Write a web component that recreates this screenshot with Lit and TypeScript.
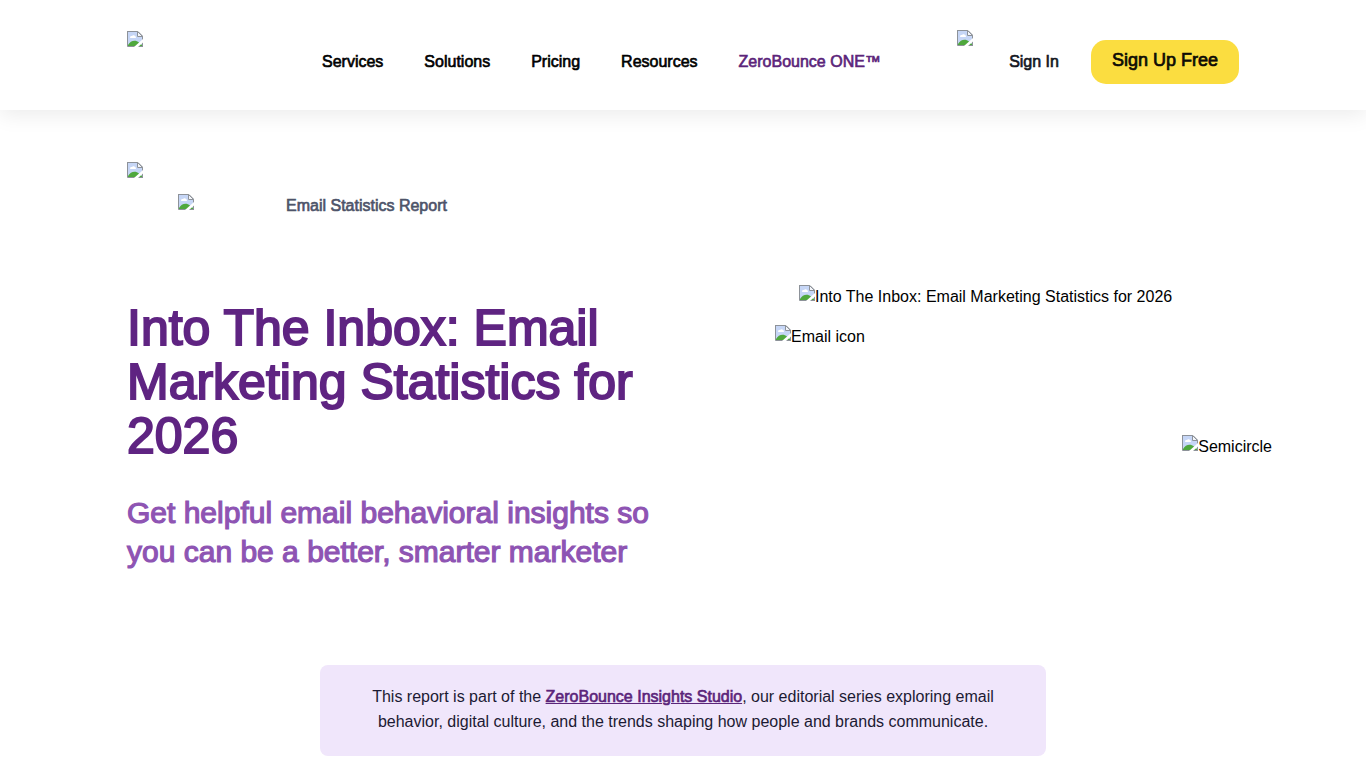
import { LitElement, html, css, svg } from "lit";
import { customElement, property } from "lit/decorators.js";

@customElement("missing-picture")
class MissingPicture extends LitElement {
  @property() alt = "";

  static styles = css`
    :host {
      display: inline-flex;
      align-items: flex-start;
      white-space: nowrap;
      font-size: 16px;
      line-height: 18px;
      color: #000;
    }
    .glyph {
      display: block;
      flex: none;
      width: 16px;
      height: 16px;
    }
    .alt {
      padding-top: 3px;
    }
  `;

  render() {
    return html`
      <svg class="glyph" viewBox="0 0 16 16" aria-hidden="true">
        ${svg`
          <path d="M0.5 0.5H11L15.5 5V15.5H0.5Z" fill="#fff" />
          <path d="M1 1H10.5V5.5H15V15H1Z" fill="#c6d6f6" />
          <path d="M3 6.5C3 5.4 4 4.8 5 5.1C5.5 3.9 7.6 3.9 8 5.2C9.2 5.1 9.5 6.8 8.3 7H3.6C3.2 7 3 6.8 3 6.5Z" fill="#fff" />
          <path d="M1 15V14C3.5 9.4 8.5 8.4 12 11.5L15 14V15Z" fill="#4fa83d" />
          <path d="M0.5 0V15.5H16M15.5 16V5" fill="none" stroke="#8d9299" />
          <path d="M0 0.5H11L15.5 5" fill="none" stroke="#8d9299" />
          <path d="M10.5 0.5V5.5H15.5Z" fill="#f4f6fa" stroke="#8d9299" />
          <path d="M16 8V11.5L11 16H7Z" fill="#fff" />
        `}
      </svg>
      ${this.alt ? html`<span class="alt">${this.alt}</span>` : null}
    `;
  }
}

@customElement("app-root")
class AppRoot extends LitElement {
  static styles = css`
    :host {
      display: block;
      min-height: 100vh;
      background: #fff;
      color: #000;
      font-family: "Liberation Sans", Arial, sans-serif;
      font-size: 16px;
      line-height: 24px;
    }
    a {
      color: inherit;
      text-decoration: none;
    }
    .strong {
      -webkit-text-stroke: 0.04em currentColor;
    }
    .wrap {
      box-sizing: border-box;
      max-width: 1144px;
      margin: 0 auto;
      padding: 0 16px;
    }
    .header {
      box-shadow: 0 5px 20px rgba(0, 0, 0, 0.08);
    }
    .bar {
      display: flex;
      align-items: flex-start;
      padding-top: 30px;
      padding-bottom: 26px;
    }
    .logo {
      display: block;
      width: 195px;
      flex: none;
      padding-top: 1px;
      line-height: 0;
      box-sizing: border-box;
    }
    .nav {
      display: flex;
      gap: 41px;
      padding-top: 20px;
      white-space: nowrap;
    }
    .one {
      color: #5b247a;
    }
    .actions {
      display: flex;
      align-items: flex-start;
      margin-left: auto;
      white-space: nowrap;
    }
    .signin {
      margin: 20px 32px 0 36px;
      color: #14171f;
    }
    .signup {
      margin-top: 10px;
      height: 44px;
      padding: 0 21px 4px;
      border: 0;
      border-radius: 15px;
      background: #fbdd40;
      color: #0e0b05;
      font-family: inherit;
      font-size: 18px;
      line-height: 24px;
    }
    .crumbs {
      padding-top: 52px;
      display: flex;
      flex-direction: column;
      align-items: flex-start;
      gap: 16px;
    }
    .crumb {
      display: flex;
      align-items: flex-start;
      gap: 92px;
      margin-left: 51px;
      color: #4d5369;
    }
    .hero {
      display: grid;
      grid-template-columns: minmax(0, 548px) 497px;
      justify-content: space-between;
      margin-right: -33px;
      padding-top: 67px;
    }
    .copy {
      padding-top: 16px;
    }
    h1 {
      margin: 0;
      font-size: 50px;
      line-height: 54px;
      font-weight: 400;
      color: #5f2482;
      -webkit-text-stroke-width: 0.03em;
    }
    h2 {
      margin: 30px 0 0;
      font-size: 30px;
      line-height: 39px;
      font-weight: 400;
      color: #8e54b3;
      -webkit-text-stroke-width: 0.03em;
    }
    .art {
      display: flex;
      flex-direction: column;
      align-items: flex-start;
    }
    .cover {
      margin-left: 24px;
    }
    .mail {
      margin-top: 19px;
    }
    .semi {
      margin-top: 89px;
      align-self: flex-end;
    }
    .note {
      box-sizing: border-box;
      max-width: 726px;
      margin: 94px auto 12px;
      padding: 19px 40px 22px;
      border-radius: 8px;
      background: #f0e6fb;
      color: #1c1a33;
      text-align: center;
      line-height: 25px;
    }
    .note p {
      margin: 0;
    }
    .note a {
      color: #5b247a;
      text-decoration: underline;
    }
  `;

  render() {
    return html`
      <header class="header">
        <div class="wrap bar">
          <a class="logo" href="#" aria-label="ZeroBounce"><missing-picture></missing-picture></a>
          <nav class="nav strong">
            ${["Services", "Solutions", "Pricing", "Resources"].map(
              (item) => html`<a href="#">${item}</a>`
            )}
            <a class="one" href="#">ZeroBounce ONE™</a>
          </nav>
          <div class="actions">
            <missing-picture></missing-picture>
            <a class="signin strong" href="#">Sign In</a>
            <button class="signup strong" type="button">Sign Up Free</button>
          </div>
        </div>
      </header>
      <main class="wrap">
        <div class="crumbs">
          <missing-picture></missing-picture>
          <div class="crumb">
            <missing-picture></missing-picture>
            <span class="strong">Email Statistics Report</span>
          </div>
        </div>
        <section class="hero">
          <div class="copy">
            <h1 class="strong">Into The Inbox: Email Marketing Statistics for 2026</h1>
            <h2 class="strong">Get helpful email behavioral insights so you can be a better, smarter marketer</h2>
          </div>
          <div class="art">
            <missing-picture class="cover" alt="Into The Inbox: Email Marketing Statistics for 2026"></missing-picture>
            <missing-picture class="mail" alt="Email icon"></missing-picture>
            <missing-picture class="semi" alt="Semicircle"></missing-picture>
          </div>
        </section>
        <aside class="note">
          <p>This report is part of the <a class="strong" href="#">ZeroBounce Insights Studio</a>, our editorial series exploring email behavior, digital culture, and the trends shaping how people and brands communicate.</p>
        </aside>
      </main>
    `;
  }
}
